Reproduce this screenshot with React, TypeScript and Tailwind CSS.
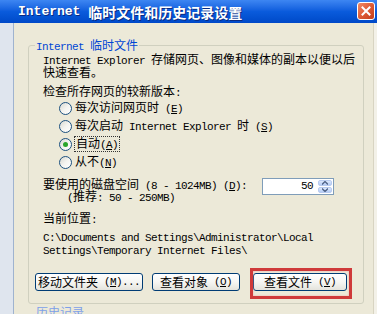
import React from "react";

function M({ t }: { t: string }) {
  const parts = t.split(/([\x20-\x7e]+)/);
  return (
    <>
      {parts.map((p, i) =>
        p === "" ? null : /[\x20-\x7e]/.test(p[0]) ? (
          <span
            key={i}
            className="font-['Liberation_Mono',monospace] text-[11px] tracking-[-0.6px] whitespace-pre"
          >
            {p}
          </span>
        ) : (
          <span key={i}>{p}</span>
        )
      )}
    </>
  );
}

function K({ k }: { k: string }) {
  return (
    <span className="font-['Liberation_Mono',monospace] text-[11px] tracking-[-0.6px] whitespace-pre">
      (<span className="underline underline-offset-[1px]">{k}</span>)
    </span>
  );
}

function Radio({ checked }: { checked?: boolean }) {
  return (
    <span className="w-[13px] h-[13px] rounded-full border border-[#1c5180] bg-gradient-to-br from-[#d8d8d0] via-[#f4f4f0] to-white flex items-center justify-center shrink-0">
      {checked && <span className="w-[5px] h-[5px] rounded-full bg-[#2aa52a]" />}
    </span>
  );
}

function Btn({ children, w }: { children: React.ReactNode; w: string }) {
  return (
    <div
      className={`${w} h-[18px] rounded-[3px] border border-[#003c74] bg-gradient-to-b from-white via-[#f6f6f3] to-[#e4e3dc] flex items-center justify-center text-[12px] leading-[12px] text-black`}
    >
      {children}
    </div>
  );
}

export default function App() {
  return (
    <div className="w-[377px] h-[314px] relative overflow-hidden bg-[#ece9d8] font-['Noto_Sans_CJK_SC','Noto_Sans',sans-serif] text-[12px] text-black">
      {/* Title bar */}
      <div className="h-[23px] relative flex items-center pl-[18px] bg-gradient-to-b from-[#3d86f2] via-[#0a5bdc] to-[#0049c8] text-white font-bold">
        <span className="font-['Liberation_Mono',monospace] text-[13px] tracking-[0px] whitespace-pre [text-shadow:1px_1px_0_#0a2a80]">
          Internet{" "}
        </span>
        <span className="text-[14px] leading-[16px] [text-shadow:1px_1px_0_#0a2a80]">
          临时文件和历史记录设置
        </span>
        <div className="absolute left-[357px] top-[2px] w-[18px] h-[18px] rounded-[3px] border border-white bg-gradient-to-br from-[#f08a66] via-[#de5a35] to-[#c23e1c] flex items-center justify-center">
          <svg width="10" height="10" viewBox="0 0 10 10">
            <path d="M1.5 1.5 L8.5 8.5 M8.5 1.5 L1.5 8.5" stroke="white" strokeWidth="2" strokeLinecap="square" />
          </svg>
        </div>
      </div>

      {/* Body */}
      <div className="flex h-[291px]">
        <div className="w-[14px] bg-[#dfe5ee] border-r border-[#9fb3cf]" />
        <div className="flex-1 pt-[22px] pl-[14px]">
          <div className="w-[336px] h-[259px] border border-[#d0d0bf] rounded-[3px] relative pl-[6px] pt-[6px]">
            <div className="absolute left-[6px] top-[-7px] px-[1px] bg-[#ece9d8] text-[#0046d5] leading-[12px]">
              <M t="Internet 临时文件" />
            </div>

            <div className="pl-[8px] leading-[13px]">
              <div className="h-[13px] whitespace-nowrap">
                <M t="Internet Explorer 存储网页、图像和媒体的副本以便以后" />
              </div>
              <div className="h-[13px]">
                <M t="快速查看。" />
              </div>
              <div className="h-[13px] mt-[6px]">
                <M t="检查所存网页的较新版本:" />
              </div>

              <div className="mt-[2px] pl-[16px]">
                <div className="h-[18px] flex items-center gap-[3px]">
                  <Radio />
                  <span className="whitespace-nowrap">
                    <M t="每次访问网页时 " />
                    <K k="E" />
                  </span>
                </div>
                <div className="h-[18px] flex items-center gap-[3px]">
                  <Radio />
                  <span className="whitespace-nowrap">
                    <M t="每次启动 Internet Explorer 时 " />
                    <K k="S" />
                  </span>
                </div>
                <div className="h-[18px] flex items-center gap-[2px]">
                  <Radio checked />
                  <span className="whitespace-nowrap border border-dotted border-[#333] px-[1px] leading-[12px]">
                    <M t="自动" />
                    <K k="A" />
                  </span>
                </div>
                <div className="h-[18px] flex items-center gap-[3px]">
                  <Radio />
                  <span className="whitespace-nowrap">
                    <M t="从不" />
                    <K k="N" />
                  </span>
                </div>
              </div>

              <div className="mt-[7px] flex items-start">
                <div className="leading-[12px]">
                  <div className="h-[12px] whitespace-nowrap">
                    <M t="要使用的磁盘空间 (8 - 1024MB) " />
                    <K k="D" />
                    <M t=":" />
                  </div>
                  <div className="h-[12px] pl-[24px] whitespace-nowrap">
                    <M t="(推荐: 50 - 250MB)" />
                  </div>
                </div>
                <div className="ml-auto mr-[29px] w-[72px] h-[17px] border border-[#7f9db9] bg-white flex items-center justify-end pr-[1px]">
                  <span className="font-['Liberation_Mono',monospace] text-[11px] tracking-[-0.6px] mr-[5px]">50</span>
                  <div className="w-[14px] h-[13px] flex flex-col gap-[1px]">
                    <div className="flex-1 rounded-[2px] bg-gradient-to-b from-[#dce8fc] to-[#b4cbf4] border border-[#b8cbf0] flex items-center justify-center">
                      <svg width="6" height="4" viewBox="0 0 6 4">
                        <path d="M0 3.5 L3 0.5 L6 3.5" fill="none" stroke="#4d6185" strokeWidth="1.3" />
                      </svg>
                    </div>
                    <div className="flex-1 rounded-[2px] bg-gradient-to-b from-[#dce8fc] to-[#b4cbf4] border border-[#b8cbf0] flex items-center justify-center">
                      <svg width="6" height="4" viewBox="0 0 6 4">
                        <path d="M0 0.5 L3 3.5 L6 0.5" fill="none" stroke="#4d6185" strokeWidth="1.3" />
                      </svg>
                    </div>
                  </div>
                </div>
              </div>

              <div className="mt-[10px] h-[12px] leading-[12px]">
                <M t="当前位置:" />
              </div>
              <div className="mt-[5px] leading-[13px]">
                <div className="h-[13px] whitespace-nowrap">
                  <M t="C:\Documents and Settings\Administrator\Local" />
                </div>
                <div className="h-[13px] whitespace-nowrap">
                  <M t="Settings\Temporary Internet Files\" />
                </div>
              </div>
            </div>

            <div className="mt-[18px] flex">
              <Btn w="w-[108px]">
                <M t="移动文件夹 " />
                <K k="M" />
                <M t="..." />
              </Btn>
              <div className="w-[9px]" />
              <Btn w="w-[88px]">
                <M t="查看对象 " />
                <K k="O" />
              </Btn>
              <div className="w-[13px]" />
              <Btn w="w-[94px]">
                <M t="查看文件 " />
                <K k="V" />
              </Btn>
            </div>
          </div>
          <div className="pl-[8px] mt-[2px] text-[#7da0e8] leading-[12px]">历史记录</div>
        </div>
        <div className="w-[4px] bg-[#f3f1e8] border-l border-[#d8d4c2]" />
      </div>

      {/* Red annotation rectangle */}
      <div className="absolute left-[250px] top-[268px] w-[102px] h-[31px] border-[3px] border-[#cf3a3a] shadow-[inset_0_0_2px_#f0a0a0]" />
    </div>
  );
}
